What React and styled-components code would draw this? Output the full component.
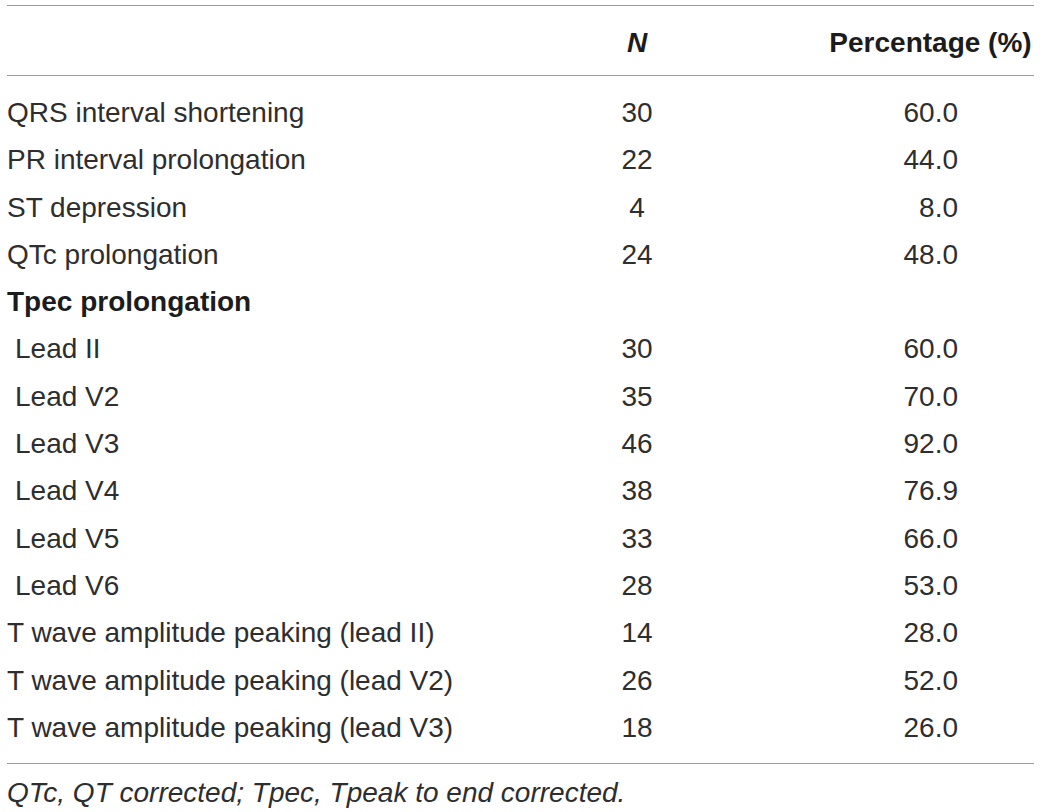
import styled, { createGlobalStyle } from "styled-components";

const GlobalStyle = createGlobalStyle`
  html, body {
    margin: 0;
    padding: 0;
    background: #ffffff;
  }
  body {
    font-family: "Liberation Sans", Arial, Helvetica, sans-serif;
    color: #2e2e2e;
  }
`;

const TableWrap = styled.div`
  margin: 5px 0 0 7px;
  width: 1027px;
  font-size: 28px;
`;

const Grid = styled.div`
  display: grid;
  grid-template-columns: 580px 100px 347px;
`;

const Head = styled(Grid)`
  border-top: 1px solid #9a9a9a;
  border-bottom: 1px solid #9a9a9a;
  height: 71px;
  padding-top: 3px;
  box-sizing: border-box;
  line-height: 68px;
  font-weight: 700;
  color: #1c1c1c;
`;

const Body = styled.div`
  padding: 13px 0 12px;
  border-bottom: 1px solid #9a9a9a;
`;

const Row = styled(Grid)`
  height: 47.3px;
  line-height: 47.3px;
`;

const Label = styled.div`
  padding-left: ${(p) => (p.$indent ? "8px" : "0")};
  font-weight: ${(p) => (p.$bold ? 700 : 400)};
  color: ${(p) => (p.$bold ? "#1c1c1c" : "inherit")};
  white-space: nowrap;
`;

const Count = styled.div`
  text-align: center;
  font-style: ${(p) => (p.$italic ? "italic" : "normal")};
`;

const Pct = styled.div`
  padding-left: 140px;
  text-align: center;
  white-space: nowrap;
`;

const Value = styled.span`
  display: inline-block;
  width: 56px;
  text-align: right;
  margin-left: -1px;
`;

const Note = styled.p`
  margin: 0;
  padding-top: 9px;
  line-height: 40px;
  font-style: italic;
`;

const rows = [
  { label: "QRS interval shortening", n: "30", pct: "60.0" },
  { label: "PR interval prolongation", n: "22", pct: "44.0" },
  { label: "ST depression", n: "4", pct: "8.0" },
  { label: "QTc prolongation", n: "24", pct: "48.0" },
  { label: "Tpec prolongation", bold: true },
  { label: "Lead II", n: "30", pct: "60.0", indent: true },
  { label: "Lead V2", n: "35", pct: "70.0", indent: true },
  { label: "Lead V3", n: "46", pct: "92.0", indent: true },
  { label: "Lead V4", n: "38", pct: "76.9", indent: true },
  { label: "Lead V5", n: "33", pct: "66.0", indent: true },
  { label: "Lead V6", n: "28", pct: "53.0", indent: true },
  { label: "T wave amplitude peaking (lead II)", n: "14", pct: "28.0" },
  { label: "T wave amplitude peaking (lead V2)", n: "26", pct: "52.0" },
  { label: "T wave amplitude peaking (lead V3)", n: "18", pct: "26.0" },
];

export default function App() {
  return (
    <>
      <GlobalStyle />
      <TableWrap>
        <Head>
          <div />
          <Count $italic>N</Count>
          <Pct>Percentage (%)</Pct>
        </Head>
        <Body>
          {rows.map((r) => (
            <Row key={r.label}>
              <Label $indent={r.indent} $bold={r.bold}>
                {r.label}
              </Label>
              <Count>{r.n}</Count>
              <Pct>{r.pct && <Value>{r.pct}</Value>}</Pct>
            </Row>
          ))}
        </Body>
        <Note>QTc, QT corrected; Tpec, Tpeak to end corrected.</Note>
      </TableWrap>
    </>
  );
}
